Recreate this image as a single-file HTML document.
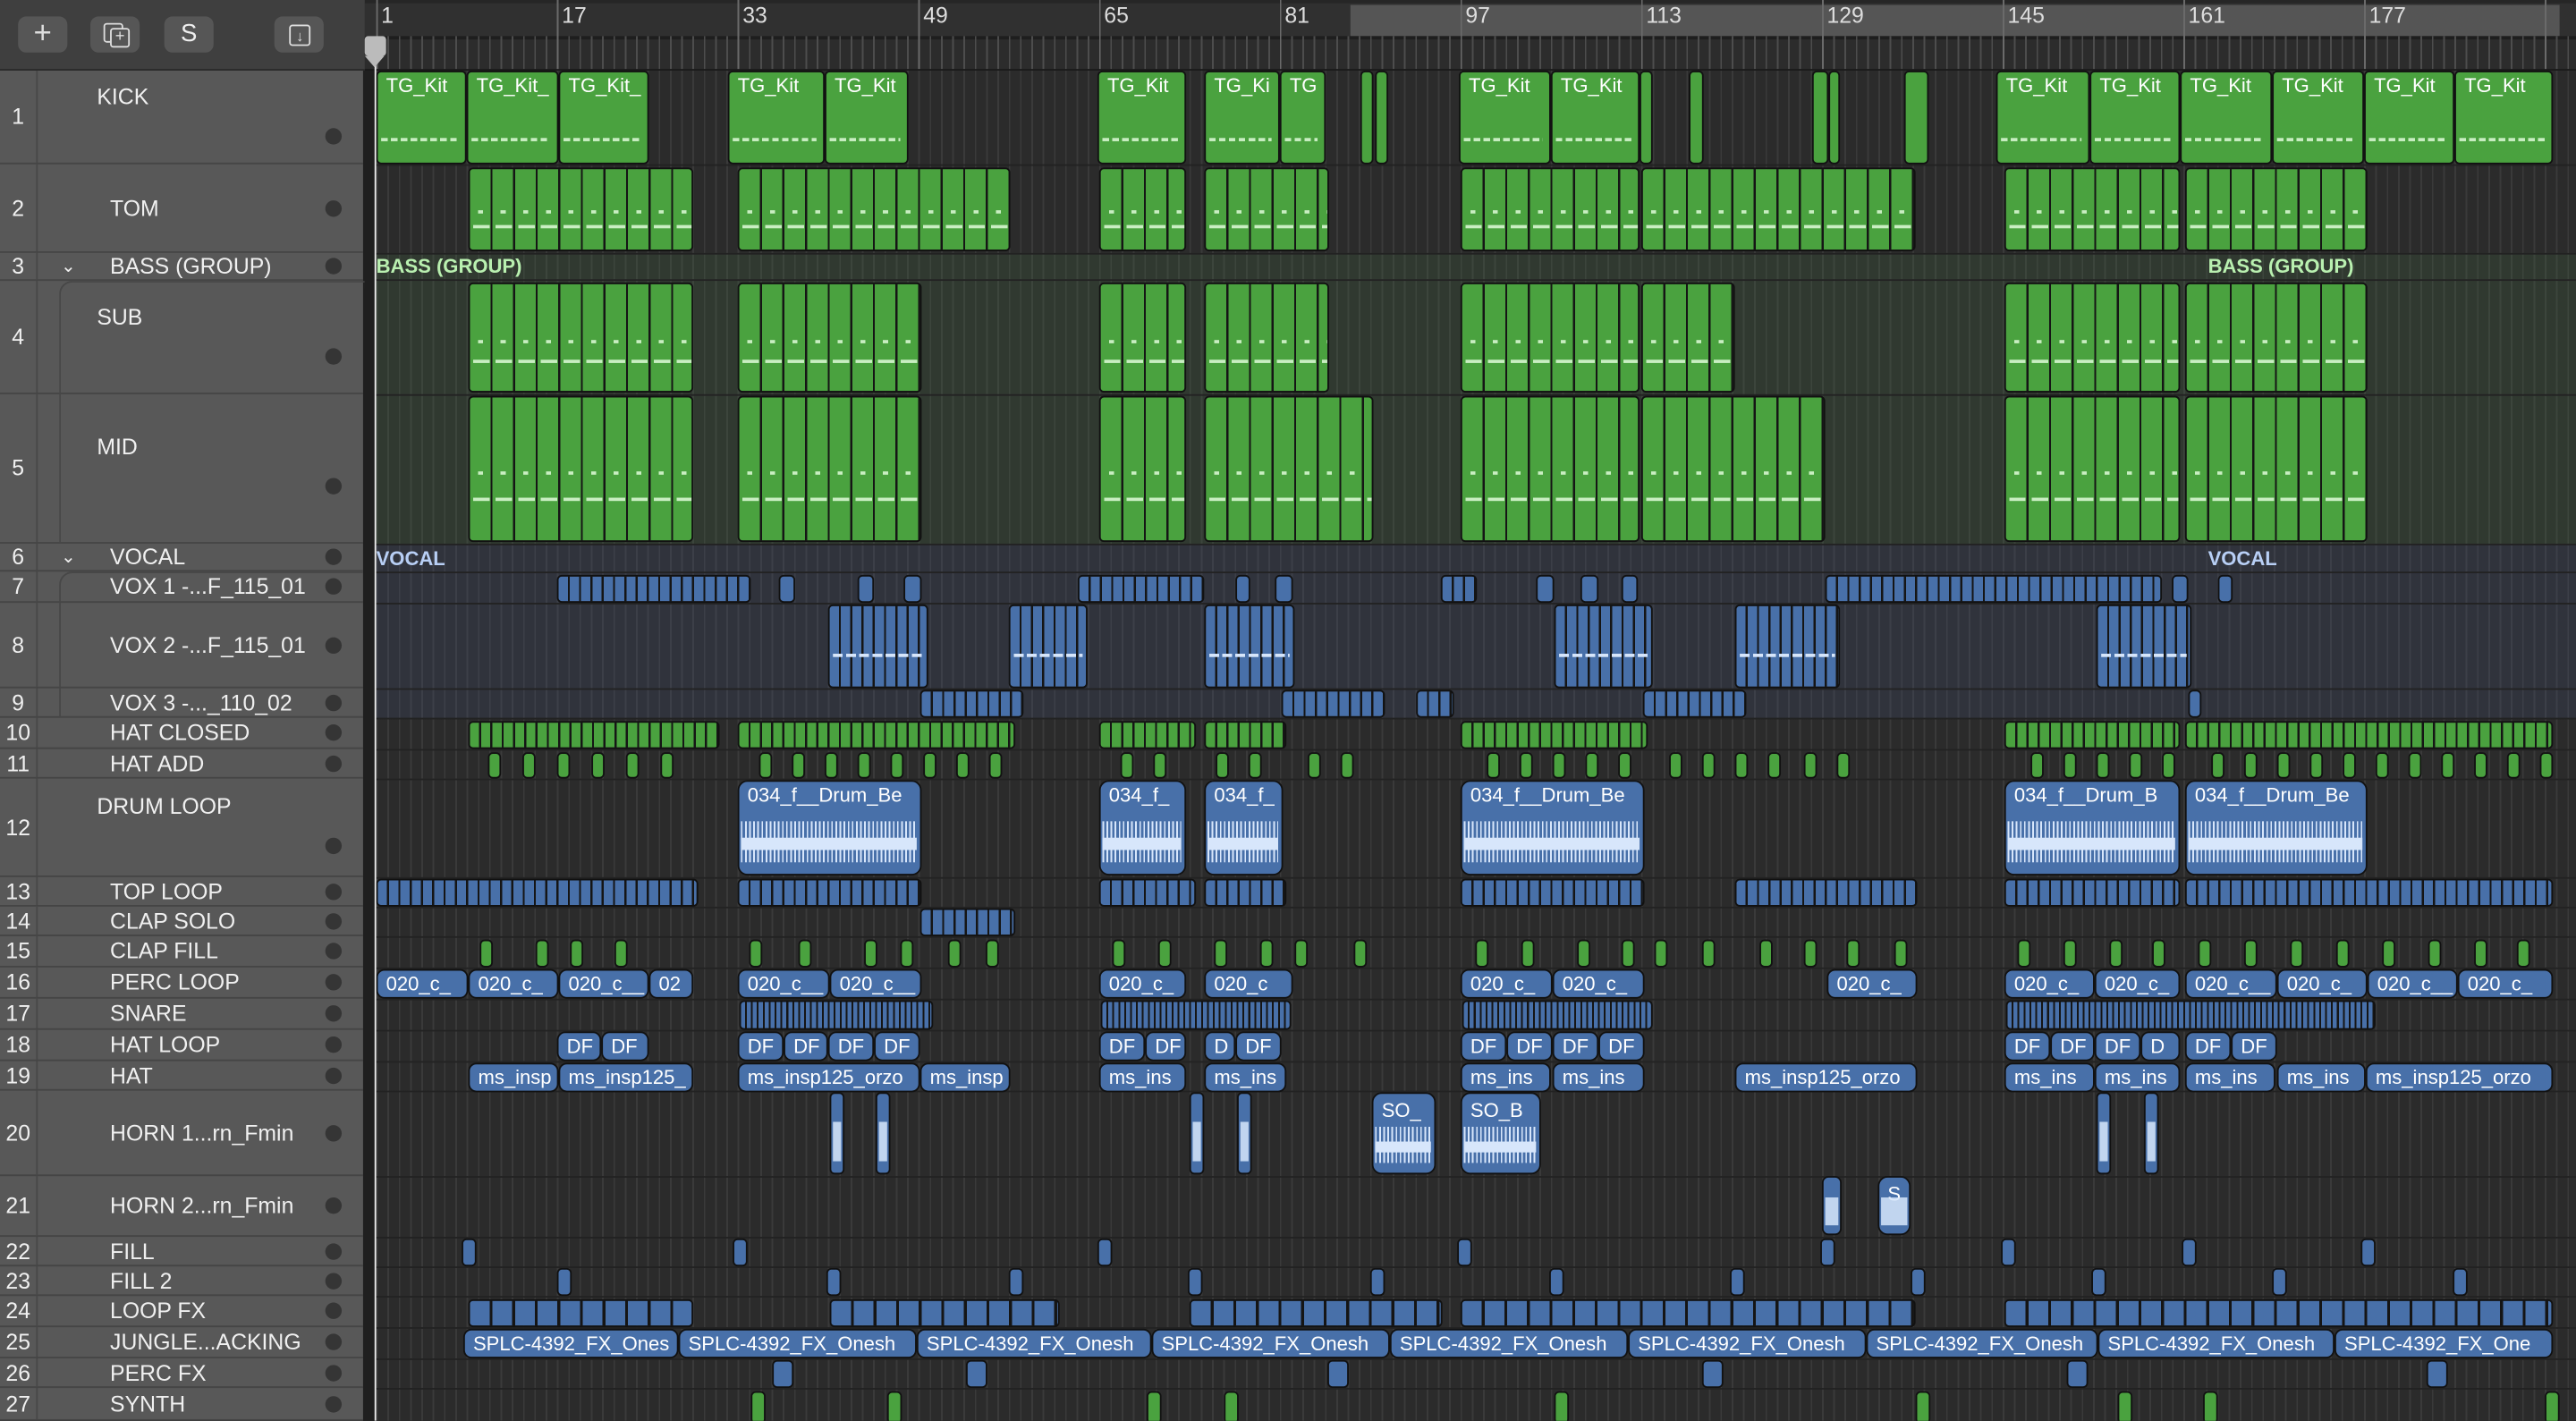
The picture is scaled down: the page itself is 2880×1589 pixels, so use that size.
<!DOCTYPE html>
<html><head><meta charset="utf-8">
<style>
html,body{margin:0;padding:0;background:#2a2a2a;overflow:hidden;width:2880px;height:1588px}
#p{position:absolute;left:0;top:0;width:1568px;height:865px;transform:scale(1.83673);transform-origin:0 0;font-family:"Liberation Sans",sans-serif;background:#2b2b2b;overflow:hidden}
.a{position:absolute}
.hd{position:absolute;left:0;width:221px;background:#585858;border-bottom:1px solid #454545;box-sizing:border-box;color:#f0f0f0;font-size:13.5px}
.hd .n{position:absolute;left:0;width:22px;text-align:center;top:50%;transform:translateY(-50%)}
.hd .t{position:absolute;left:67px;top:50%;transform:translateY(-50%);white-space:nowrap}
.hd .d{position:absolute;left:198px;top:50%;margin-top:-5px;width:10px;height:10px;border-radius:50%;background:#353535}
.hd .c{position:absolute;left:22px;top:0;bottom:0;border-left:1px solid #474747}
.row{position:absolute;left:0;width:1568px}
.r{position:absolute;top:0;bottom:0;box-sizing:border-box;border:1px solid #111;border-radius:3px;overflow:hidden;color:#fff;font-size:12px;line-height:14px;padding:1px 0 0 5px;white-space:nowrap}
.g{background:#4aa23f}
.b{background:#4870a9}
.gs{background:repeating-linear-gradient(90deg,#4aa23f 0 5.6px,#151515 5.6px 6.875px)}
.gs2{background:repeating-linear-gradient(90deg,#4aa23f 0 12.5px,#151515 12.5px 13.75px)}
.bs{background:repeating-linear-gradient(90deg,#4870a9 0 5.6px,#151515 5.6px 6.875px)}
.k::after{content:"";position:absolute;left:2px;right:4px;top:40px;height:2px;background:repeating-linear-gradient(90deg,#c9eec2 0 4px,transparent 4px 6px)}
.m::before{content:"";position:absolute;left:0;right:0;top:52%;height:2px;background:repeating-linear-gradient(90deg,transparent 0 5px,#c9eec2 5px 8px,transparent 8px 13.75px)}
.m::after{content:"";position:absolute;left:0;right:0;top:70%;height:2px;background:repeating-linear-gradient(90deg,transparent 0 2px,#c9eec2 2px 12px,transparent 12px 13.75px)}
.w::after{content:"";position:absolute;left:1px;right:2px;top:42%;bottom:12%;background:linear-gradient(#d7e6fb,#d7e6fb) 0 55%/100% 30% no-repeat,repeating-linear-gradient(90deg,#d7e6fb 0 1px,transparent 1px 2.5px)}
.vl::after{content:"";position:absolute;left:2px;right:2px;top:60%;height:2px;background:repeating-linear-gradient(90deg,#d7e6fb 0 6px,transparent 6px 8px)}
.ws::after{content:"";position:absolute;left:1px;right:1px;top:35%;bottom:15%;background:#d7e6fb;opacity:.85}
</style></head><body><div id="p">

<div class="a" style="left:229px;top:43px;width:1339px;height:822px;background:repeating-linear-gradient(90deg,#3a3a3a 0 1px,transparent 1px 6.875px)"></div>
<div class="a" style="left:222px;top:154px;width:1346px;height:177px;background:rgba(70,110,70,0.22)"></div>
<div class="a" style="left:222px;top:331px;width:1346px;height:106px;background:rgba(70,90,140,0.18)"></div>
<div class="a" style="left:222px;top:0;width:1346px;height:865px;background:linear-gradient(#222,#222) 0 100px/100% 1px no-repeat,linear-gradient(#222,#222) 0 154px/100% 1px no-repeat,linear-gradient(#222,#222) 0 170px/100% 1px no-repeat,linear-gradient(#222,#222) 0 240px/100% 1px no-repeat,linear-gradient(#222,#222) 0 331px/100% 1px no-repeat,linear-gradient(#222,#222) 0 348px/100% 1px no-repeat,linear-gradient(#222,#222) 0 367px/100% 1px no-repeat,linear-gradient(#222,#222) 0 419px/100% 1px no-repeat,linear-gradient(#222,#222) 0 437px/100% 1px no-repeat,linear-gradient(#222,#222) 0 456px/100% 1px no-repeat,linear-gradient(#222,#222) 0 474px/100% 1px no-repeat,linear-gradient(#222,#222) 0 534px/100% 1px no-repeat,linear-gradient(#222,#222) 0 552px/100% 1px no-repeat,linear-gradient(#222,#222) 0 570px/100% 1px no-repeat,linear-gradient(#222,#222) 0 589px/100% 1px no-repeat,linear-gradient(#222,#222) 0 608px/100% 1px no-repeat,linear-gradient(#222,#222) 0 627px/100% 1px no-repeat,linear-gradient(#222,#222) 0 646px/100% 1px no-repeat,linear-gradient(#222,#222) 0 664px/100% 1px no-repeat,linear-gradient(#222,#222) 0 716px/100% 1px no-repeat,linear-gradient(#222,#222) 0 753px/100% 1px no-repeat,linear-gradient(#222,#222) 0 771px/100% 1px no-repeat,linear-gradient(#222,#222) 0 789px/100% 1px no-repeat,linear-gradient(#222,#222) 0 808px/100% 1px no-repeat,linear-gradient(#222,#222) 0 827px/100% 1px no-repeat,linear-gradient(#222,#222) 0 845px/100% 1px no-repeat"></div>

<div class="a" style="left:222px;top:0;width:1346px;height:22px;background:#303030;border-top:2px solid #262626;box-sizing:border-box"></div>
<div class="a" style="left:822px;top:3px;width:736px;height:19px;background:#555"></div>
<div class="a" style="left:222px;top:22px;width:1346px;height:21px;background:#2c2c2c;border-top:2px solid #1e1e1e;box-sizing:border-box"></div>
<div class="a" style="left:229px;top:22px;width:1339px;height:21px;background:repeating-linear-gradient(90deg,#4d4d4d 0 1px,transparent 1px 6.875px)"></div>
<div class="a" style="left:229px;top:0;width:1339px;height:43px;background:repeating-linear-gradient(90deg,#6a6a6a 0 1px,transparent 1px 110px)"></div>
<div class="a" style="left:222px;top:42px;width:1346px;height:1px;background:#1a1a1a"></div>
<div class="a" style="top:2px;color:#ddd;font-size:13.5px;left:0;width:1568px;height:20px">
<span class="a" style="left:232px">1</span><span class="a" style="left:342px">17</span><span class="a" style="left:452px">33</span><span class="a" style="left:562px">49</span><span class="a" style="left:672px">65</span><span class="a" style="left:782px">81</span><span class="a" style="left:892px">97</span><span class="a" style="left:1002px">113</span><span class="a" style="left:1112px">129</span><span class="a" style="left:1222px">145</span><span class="a" style="left:1332px">161</span><span class="a" style="left:1442px">177</span></div>

<div class="a" style="left:0;top:0;width:222px;height:43px;background:#3f3f3f;border-bottom:1px solid #2a2a2a;box-sizing:border-box"></div>
<div class="a" style="left:11px;top:10px;width:30px;height:22px;background:#565656;border-radius:5px;color:#ddd;text-align:center;font-size:19px;line-height:21px">+</div>
<div class="a" style="left:55px;top:10px;width:30px;height:22px;background:#565656;border-radius:5px"><div class="a" style="left:8px;top:4px;width:10px;height:10px;border:1.5px solid #ddd;border-radius:2px"></div><div class="a" style="left:12px;top:7px;width:10px;height:10px;border:1.5px solid #ddd;border-radius:2px;background:#565656;color:#ddd;font-size:10px;line-height:10px;text-align:center">+</div></div>
<div class="a" style="left:100px;top:10px;width:30px;height:22px;background:#565656;border-radius:5px;color:#eee;text-align:center;font-size:15px;line-height:22px">S</div>
<div class="a" style="left:167px;top:10px;width:30px;height:22px;background:#565656;border-radius:5px"><div class="a" style="left:9px;top:5px;width:11px;height:11px;border:1.5px solid #ddd;border-radius:2px;color:#ddd;font-size:9px;line-height:13px;text-align:center">↓</div></div>
<div class="a" style="left:220px;top:43px;width:8px;height:822px;background:#1f1f1f"></div>

<div class="hd" style="top:43px;height:57px"><div class="c"></div><div class="n">1</div><div class="t" style="left:59px;top:16px">KICK</div><div class="d" style="top:40px"></div></div>
<div class="hd" style="top:100px;height:54px"><div class="c"></div><div class="n">2</div><div class="t">TOM</div><div class="d"></div></div>
<div class="hd" style="top:154px;height:17px"><div class="c"></div><div class="n">3</div><div class="t" style="left:37px;font-size:11px">⌄</div><div class="t">BASS (GROUP)</div><div class="d"></div></div>
<div class="hd" style="top:171px;height:69px"><div class="c"></div><div class="n">4</div><div class="t" style="left:59px;top:22px">SUB</div><div class="d" style="top:46px"></div></div>
<div class="hd" style="top:240px;height:91px"><div class="c"></div><div class="n">5</div><div class="t" style="left:59px;top:32px">MID</div><div class="d" style="top:56px"></div></div>
<div class="a" style="left:36px;top:171px;width:185px;height:160px;border-left:1px solid #474747;border-top:1px solid #474747;border-top-left-radius:8px"></div>
<div class="hd" style="top:331px;height:17px"><div class="c"></div><div class="n">6</div><div class="t" style="left:37px;font-size:11px">⌄</div><div class="t">VOCAL</div><div class="d"></div></div>
<div class="hd" style="top:348px;height:19px"><div class="c"></div><div class="n">7</div><div class="t">VOX 1 -...F_115_01</div><div class="d"></div></div>
<div class="hd" style="top:367px;height:52px"><div class="c"></div><div class="n">8</div><div class="t">VOX 2 -...F_115_01</div><div class="d"></div></div>
<div class="hd" style="top:419px;height:18px"><div class="c"></div><div class="n">9</div><div class="t">VOX 3 -..._110_02</div><div class="d"></div></div>
<div class="a" style="left:36px;top:348px;width:185px;height:89px;border-left:1px solid #474747;border-top:1px solid #474747;border-bottom:1px solid #474747;border-top-left-radius:8px;box-sizing:border-box"></div>
<div class="hd" style="top:437px;height:19px"><div class="c"></div><div class="n">10</div><div class="t">HAT CLOSED</div><div class="d"></div></div>
<div class="hd" style="top:456px;height:18px"><div class="c"></div><div class="n">11</div><div class="t">HAT ADD</div><div class="d"></div></div>
<div class="hd" style="top:474px;height:60px"><div class="c"></div><div class="n">12</div><div class="t" style="left:59px;top:17px">DRUM LOOP</div><div class="d" style="top:41px"></div></div>
<div class="hd" style="top:534px;height:18px"><div class="c"></div><div class="n">13</div><div class="t">TOP LOOP</div><div class="d"></div></div>
<div class="hd" style="top:552px;height:18px"><div class="c"></div><div class="n">14</div><div class="t">CLAP SOLO</div><div class="d"></div></div>
<div class="hd" style="top:570px;height:19px"><div class="c"></div><div class="n">15</div><div class="t">CLAP FILL</div><div class="d"></div></div>
<div class="hd" style="top:589px;height:19px"><div class="c"></div><div class="n">16</div><div class="t">PERC LOOP</div><div class="d"></div></div>
<div class="hd" style="top:608px;height:19px"><div class="c"></div><div class="n">17</div><div class="t">SNARE</div><div class="d"></div></div>
<div class="hd" style="top:627px;height:19px"><div class="c"></div><div class="n">18</div><div class="t">HAT LOOP</div><div class="d"></div></div>
<div class="hd" style="top:646px;height:18px"><div class="c"></div><div class="n">19</div><div class="t">HAT</div><div class="d"></div></div>
<div class="hd" style="top:664px;height:52px"><div class="c"></div><div class="n">20</div><div class="t">HORN 1...rn_Fmin</div><div class="d"></div></div>
<div class="hd" style="top:716px;height:37px"><div class="c"></div><div class="n">21</div><div class="t">HORN 2...rn_Fmin</div><div class="d"></div></div>
<div class="hd" style="top:753px;height:18px"><div class="c"></div><div class="n">22</div><div class="t">FILL</div><div class="d"></div></div>
<div class="hd" style="top:771px;height:18px"><div class="c"></div><div class="n">23</div><div class="t">FILL 2</div><div class="d"></div></div>
<div class="hd" style="top:789px;height:19px"><div class="c"></div><div class="n">24</div><div class="t">LOOP FX</div><div class="d"></div></div>
<div class="hd" style="top:808px;height:19px"><div class="c"></div><div class="n">25</div><div class="t">JUNGLE...ACKING</div><div class="d"></div></div>
<div class="hd" style="top:827px;height:18px"><div class="c"></div><div class="n">26</div><div class="t">PERC FX</div><div class="d"></div></div>
<div class="hd" style="top:845px;height:20px"><div class="c"></div><div class="n">27</div><div class="t">SYNTH</div><div class="d"></div></div>

<div class="a" style="left:229px;top:155px;color:#b9f0b0;font-size:12px;font-weight:bold">BASS (GROUP)</div>
<div class="a" style="left:1344px;top:155px;color:#b9f0b0;font-size:12px;font-weight:bold">BASS (GROUP)</div>
<div class="a" style="left:229px;top:333px;color:#b8cff5;font-size:12px;font-weight:bold">VOCAL</div>
<div class="a" style="left:1344px;top:333px;color:#b8cff5;font-size:12px;font-weight:bold">VOCAL</div>

<div class="row" style="top:43px;height:57px">
<div class="r g k" style="left:229px;width:55px">TG_Kit</div><div class="r g k" style="left:284px;width:56px">TG_Kit_</div><div class="r g k" style="left:340px;width:55px">TG_Kit_</div>
<div class="r g k" style="left:443px;width:59px">TG_Kit</div><div class="r g k" style="left:502px;width:51px">TG_Kit</div>
<div class="r g k" style="left:668px;width:54px">TG_Kit</div><div class="r g k" style="left:733px;width:46px">TG_Ki</div><div class="r g k" style="left:779px;width:28px">TG</div>
<div class="r g" style="left:828px;width:8px"></div><div class="r g" style="left:837px;width:8px"></div>
<div class="r g k" style="left:888px;width:56px">TG_Kit</div><div class="r g k" style="left:944px;width:54px">TG_Kit</div><div class="r g" style="left:998px;width:8px"></div>
<div class="r g" style="left:1028px;width:9px"></div><div class="r g" style="left:1103px;width:10px"></div><div class="r g" style="left:1113px;width:7px"></div><div class="r g" style="left:1159px;width:15px"></div>
<div class="r g k" style="left:1215px;width:57px">TG_Kit</div><div class="r g k" style="left:1272px;width:55px">TG_Kit</div><div class="r g k" style="left:1327px;width:56px">TG_Kit</div><div class="r g k" style="left:1383px;width:56px">TG_Kit</div><div class="r g k" style="left:1439px;width:55px">TG_Kit</div><div class="r g k" style="left:1494px;width:60px">TG_Kit</div>
</div>
<div class="row" style="top:102px;height:51px">
<div class="r gs2 m" style="left:285px;width:137px"></div><div class="r gs2 m" style="left:449px;width:166px"></div><div class="r gs2 m" style="left:669px;width:53px"></div><div class="r gs2 m" style="left:733px;width:76px"></div><div class="r gs2 m" style="left:889px;width:109px"></div><div class="r gs2 m" style="left:999px;width:167px"></div><div class="r gs2 m" style="left:1220px;width:107px"></div><div class="r gs2 m" style="left:1330px;width:111px"></div>
</div>
<div class="row" style="top:172px;height:67px">
<div class="r gs2 m" style="left:285px;width:137px"></div><div class="r gs2 m" style="left:449px;width:112px"></div><div class="r gs2 m" style="left:669px;width:53px"></div><div class="r gs2 m" style="left:733px;width:76px"></div><div class="r gs2 m" style="left:889px;width:109px"></div><div class="r gs2 m" style="left:999px;width:57px"></div><div class="r gs2 m" style="left:1220px;width:107px"></div><div class="r gs2 m" style="left:1330px;width:111px"></div>
</div>
<div class="row" style="top:241px;height:89px">
<div class="r gs2 m" style="left:285px;width:137px"></div><div class="r gs2 m" style="left:449px;width:112px"></div><div class="r gs2 m" style="left:669px;width:53px"></div><div class="r gs2 m" style="left:733px;width:103px"></div><div class="r gs2 m" style="left:889px;width:109px"></div><div class="r gs2 m" style="left:999px;width:112px"></div><div class="r gs2 m" style="left:1220px;width:107px"></div><div class="r gs2 m" style="left:1330px;width:111px"></div>
</div>
<div class="row" style="top:350px;height:17px">
<div class="r bs" style="left:339px;width:118px"></div><div class="r b" style="left:474px;width:10px"></div><div class="r b" style="left:522px;width:10px"></div><div class="r b" style="left:550px;width:11px"></div><div class="r bs" style="left:656px;width:77px"></div><div class="r b" style="left:752px;width:9px"></div><div class="r b" style="left:776px;width:11px"></div><div class="r bs" style="left:877px;width:22px"></div><div class="r b" style="left:935px;width:11px"></div><div class="r b" style="left:962px;width:11px"></div><div class="r b" style="left:987px;width:10px"></div><div class="r bs" style="left:1111px;width:205px"></div><div class="r b" style="left:1322px;width:10px"></div><div class="r b" style="left:1350px;width:9px"></div>
</div>
<div class="row" style="top:368px;height:51px">
<div class="r bs vl" style="left:504px;width:61px"></div><div class="r bs vl" style="left:614px;width:48px"></div><div class="r bs vl" style="left:733px;width:55px"></div><div class="r bs vl" style="left:946px;width:60px"></div><div class="r bs vl" style="left:1056px;width:64px"></div><div class="r bs vl" style="left:1276px;width:58px"></div>
</div>
<div class="row" style="top:420px;height:17px">
<div class="r bs" style="left:560px;width:63px"></div><div class="r bs" style="left:780px;width:63px"></div><div class="r bs" style="left:862px;width:23px"></div><div class="r bs" style="left:1000px;width:63px"></div><div class="r b" style="left:1332px;width:8px"></div>
</div>
<div class="row" style="top:439px;height:17px">
<div class="r gs" style="left:285px;width:153px"></div><div class="r gs" style="left:449px;width:169px"></div><div class="r gs" style="left:669px;width:59px"></div><div class="r gs" style="left:733px;width:50px"></div><div class="r gs" style="left:889px;width:114px"></div><div class="r gs" style="left:1220px;width:107px"></div><div class="r gs" style="left:1330px;width:224px"></div>
</div>
<div class="row" style="top:458px;height:16px">
<div class="r g" style="left:297px;width:8px"></div><div class="r g" style="left:318px;width:8px"></div><div class="r g" style="left:339px;width:8px"></div><div class="r g" style="left:360px;width:8px"></div><div class="r g" style="left:381px;width:8px"></div><div class="r g" style="left:402px;width:8px"></div><div class="r g" style="left:462px;width:8px"></div><div class="r g" style="left:482px;width:8px"></div><div class="r g" style="left:502px;width:8px"></div><div class="r g" style="left:522px;width:8px"></div><div class="r g" style="left:542px;width:8px"></div><div class="r g" style="left:562px;width:8px"></div><div class="r g" style="left:582px;width:8px"></div><div class="r g" style="left:602px;width:8px"></div><div class="r g" style="left:682px;width:8px"></div><div class="r g" style="left:702px;width:8px"></div><div class="r g" style="left:740px;width:8px"></div><div class="r g" style="left:760px;width:8px"></div><div class="r g" style="left:796px;width:8px"></div><div class="r g" style="left:816px;width:8px"></div><div class="r g" style="left:905px;width:8px"></div><div class="r g" style="left:925px;width:8px"></div><div class="r g" style="left:945px;width:8px"></div><div class="r g" style="left:965px;width:8px"></div><div class="r g" style="left:985px;width:8px"></div><div class="r g" style="left:1016px;width:8px"></div><div class="r g" style="left:1036px;width:8px"></div><div class="r g" style="left:1056px;width:8px"></div><div class="r g" style="left:1076px;width:8px"></div><div class="r g" style="left:1098px;width:8px"></div><div class="r g" style="left:1118px;width:8px"></div><div class="r g" style="left:1236px;width:8px"></div><div class="r g" style="left:1256px;width:8px"></div><div class="r g" style="left:1276px;width:8px"></div><div class="r g" style="left:1296px;width:8px"></div><div class="r g" style="left:1316px;width:8px"></div><div class="r g" style="left:1346px;width:8px"></div><div class="r g" style="left:1366px;width:8px"></div><div class="r g" style="left:1386px;width:8px"></div><div class="r g" style="left:1406px;width:8px"></div><div class="r g" style="left:1426px;width:8px"></div><div class="r g" style="left:1446px;width:8px"></div><div class="r g" style="left:1466px;width:8px"></div><div class="r g" style="left:1486px;width:8px"></div><div class="r g" style="left:1506px;width:8px"></div><div class="r g" style="left:1526px;width:8px"></div><div class="r g" style="left:1546px;width:8px"></div>
</div>
<div class="row" style="top:475px;height:58px">
<div class="r b w" style="left:449px;width:112px;border-radius:6px">034_f__Drum_Be</div><div class="r b w" style="left:669px;width:53px;border-radius:6px">034_f_</div><div class="r b w" style="left:733px;width:48px;border-radius:6px">034_f_</div><div class="r b w" style="left:889px;width:112px;border-radius:6px">034_f__Drum_Be</div><div class="r b w" style="left:1220px;width:107px;border-radius:6px">034_f__Drum_B</div><div class="r b w" style="left:1330px;width:111px;border-radius:6px">034_f__Drum_Be</div>
</div>
<div class="row" style="top:535px;height:17px">
<div class="r bs" style="left:229px;width:196px"></div><div class="r bs" style="left:449px;width:112px"></div><div class="r bs" style="left:669px;width:59px"></div><div class="r bs" style="left:733px;width:50px"></div><div class="r bs" style="left:889px;width:112px"></div><div class="r bs" style="left:1056px;width:111px"></div><div class="r bs" style="left:1220px;width:107px"></div><div class="r bs" style="left:1330px;width:224px"></div>
</div>
<div class="row" style="top:553px;height:17px"><div class="r bs" style="left:560px;width:58px"></div></div>
<div class="row" style="top:572px;height:17px">
<div class="r g" style="left:292px;width:8px"></div><div class="r g" style="left:326px;width:8px"></div><div class="r g" style="left:347px;width:8px"></div><div class="r g" style="left:374px;width:8px"></div><div class="r g" style="left:456px;width:8px"></div><div class="r g" style="left:486px;width:8px"></div><div class="r g" style="left:526px;width:8px"></div><div class="r g" style="left:548px;width:8px"></div><div class="r g" style="left:577px;width:8px"></div><div class="r g" style="left:600px;width:8px"></div><div class="r g" style="left:677px;width:8px"></div><div class="r g" style="left:705px;width:8px"></div><div class="r g" style="left:739px;width:8px"></div><div class="r g" style="left:767px;width:8px"></div><div class="r g" style="left:788px;width:8px"></div><div class="r g" style="left:824px;width:8px"></div><div class="r g" style="left:898px;width:8px"></div><div class="r g" style="left:926px;width:8px"></div><div class="r g" style="left:960px;width:8px"></div><div class="r g" style="left:987px;width:8px"></div><div class="r g" style="left:1007px;width:8px"></div><div class="r g" style="left:1036px;width:8px"></div><div class="r g" style="left:1071px;width:8px"></div><div class="r g" style="left:1098px;width:8px"></div><div class="r g" style="left:1124px;width:8px"></div><div class="r g" style="left:1153px;width:8px"></div><div class="r g" style="left:1228px;width:8px"></div><div class="r g" style="left:1256px;width:8px"></div><div class="r g" style="left:1284px;width:8px"></div><div class="r g" style="left:1310px;width:8px"></div><div class="r g" style="left:1338px;width:8px"></div><div class="r g" style="left:1366px;width:8px"></div><div class="r g" style="left:1394px;width:8px"></div><div class="r g" style="left:1422px;width:8px"></div><div class="r g" style="left:1450px;width:8px"></div><div class="r g" style="left:1478px;width:8px"></div><div class="r g" style="left:1506px;width:8px"></div><div class="r g" style="left:1532px;width:8px"></div>
</div>
<div class="row" style="top:590px;height:18px">
<div class="r b" style="left:229px;width:56px;border-radius:5px">020_c_</div><div class="r b" style="left:285px;width:55px;border-radius:5px">020_c_</div><div class="r b" style="left:340px;width:55px;border-radius:5px">020_c__</div><div class="r b" style="left:395px;width:27px;border-radius:5px">02</div><div class="r b" style="left:449px;width:56px;border-radius:5px">020_c__</div><div class="r b" style="left:505px;width:56px;border-radius:5px">020_c__</div><div class="r b" style="left:669px;width:53px;border-radius:5px">020_c_</div><div class="r b" style="left:733px;width:54px;border-radius:5px">020_c</div><div class="r b" style="left:889px;width:56px;border-radius:5px">020_c_</div><div class="r b" style="left:945px;width:56px;border-radius:5px">020_c_</div><div class="r b" style="left:1112px;width:55px;border-radius:5px">020_c_</div><div class="r b" style="left:1220px;width:55px;border-radius:5px">020_c_</div><div class="r b" style="left:1275px;width:52px;border-radius:5px">020_c_</div><div class="r b" style="left:1330px;width:56px;border-radius:5px">020_c__</div><div class="r b" style="left:1386px;width:55px;border-radius:5px">020_c_</div><div class="r b" style="left:1441px;width:55px;border-radius:5px">020_c__</div><div class="r b" style="left:1496px;width:58px;border-radius:5px">020_c_</div>
</div>
<div class="row" style="top:609px;height:18px">
<div class="r bs" style="left:450px;width:118px;background:repeating-linear-gradient(90deg,#4870a9 0 2.5px,#151515 2.5px 3.6px)"></div><div class="r bs" style="left:670px;width:116px;background:repeating-linear-gradient(90deg,#4870a9 0 2.5px,#151515 2.5px 3.6px)"></div><div class="r bs" style="left:890px;width:116px;background:repeating-linear-gradient(90deg,#4870a9 0 2.5px,#151515 2.5px 3.6px)"></div><div class="r bs" style="left:1221px;width:225px;background:repeating-linear-gradient(90deg,#4870a9 0 2.5px,#151515 2.5px 3.6px)"></div>
</div>
<div class="row" style="top:628px;height:18px">
<div class="r b" style="left:339px;width:27px;border-radius:5px">DF</div><div class="r b" style="left:366px;width:29px;border-radius:5px">DF</div><div class="r b" style="left:449px;width:28px;border-radius:5px">DF</div><div class="r b" style="left:477px;width:27px;border-radius:5px">DF</div><div class="r b" style="left:504px;width:28px;border-radius:5px">DF</div><div class="r b" style="left:532px;width:28px;border-radius:5px">DF</div><div class="r b" style="left:669px;width:28px;border-radius:5px">DF</div><div class="r b" style="left:697px;width:25px;border-radius:5px">DF</div><div class="r b" style="left:733px;width:19px;border-radius:5px">D</div><div class="r b" style="left:752px;width:28px;border-radius:5px">DF</div><div class="r b" style="left:889px;width:28px;border-radius:5px">DF</div><div class="r b" style="left:917px;width:28px;border-radius:5px">DF</div><div class="r b" style="left:945px;width:28px;border-radius:5px">DF</div><div class="r b" style="left:973px;width:28px;border-radius:5px">DF</div><div class="r b" style="left:1220px;width:28px;border-radius:5px">DF</div><div class="r b" style="left:1248px;width:27px;border-radius:5px">DF</div><div class="r b" style="left:1275px;width:28px;border-radius:5px">DF</div><div class="r b" style="left:1303px;width:24px;border-radius:5px">D</div><div class="r b" style="left:1330px;width:28px;border-radius:5px">DF</div><div class="r b" style="left:1358px;width:28px;border-radius:5px">DF</div>
</div>
<div class="row" style="top:647px;height:18px">
<div class="r b" style="left:285px;width:55px;border-radius:5px">ms_insp</div><div class="r b" style="left:340px;width:82px;border-radius:5px">ms_insp125_</div><div class="r b" style="left:449px;width:111px;border-radius:5px">ms_insp125_orzo</div><div class="r b" style="left:560px;width:55px;border-radius:5px">ms_insp</div><div class="r b" style="left:669px;width:53px;border-radius:5px">ms_ins</div><div class="r b" style="left:733px;width:50px;border-radius:5px">ms_ins</div><div class="r b" style="left:889px;width:55px;border-radius:5px">ms_ins</div><div class="r b" style="left:945px;width:56px;border-radius:5px">ms_ins</div><div class="r b" style="left:1056px;width:111px;border-radius:5px">ms_insp125_orzo</div><div class="r b" style="left:1220px;width:55px;border-radius:5px">ms_ins</div><div class="r b" style="left:1275px;width:52px;border-radius:5px">ms_ins</div><div class="r b" style="left:1330px;width:55px;border-radius:5px">ms_ins</div><div class="r b" style="left:1386px;width:54px;border-radius:5px">ms_ins</div><div class="r b" style="left:1440px;width:114px;border-radius:5px">ms_insp125_orzo</div>
</div>
<div class="row" style="top:665px;height:50px">
<div class="r b ws" style="left:505px;width:9px;padding:0"></div><div class="r b ws" style="left:533px;width:9px;padding:0"></div><div class="r b ws" style="left:724px;width:9px;padding:0"></div><div class="r b ws" style="left:753px;width:9px;padding:0"></div><div class="r b ws" style="left:1276px;width:9px;padding:0"></div><div class="r b ws" style="left:1305px;width:9px;padding:0"></div>
<div class="r b w" style="left:835px;width:39px;border-radius:6px;padding-top:3px">SO_</div><div class="r b w" style="left:889px;width:49px;border-radius:6px;padding-top:3px">SO_B</div>
</div>
<div class="row" style="top:716px;height:36px">
<div class="r b ws" style="left:1109px;width:12px;padding:0;border-radius:4px"></div><div class="r b ws" style="left:1143px;width:20px;border-radius:6px;padding:3px 0 0 5px">S</div>
</div>
<div class="row" style="top:754px;height:17px">
<div class="r b" style="left:281px;width:9px"></div><div class="r b" style="left:446px;width:9px"></div><div class="r b" style="left:668px;width:9px"></div><div class="r b" style="left:887px;width:9px"></div><div class="r b" style="left:1108px;width:9px"></div><div class="r b" style="left:1218px;width:9px"></div><div class="r b" style="left:1328px;width:9px"></div><div class="r b" style="left:1437px;width:9px"></div>
</div>
<div class="row" style="top:772px;height:17px">
<div class="r b" style="left:339px;width:9px"></div><div class="r b" style="left:503px;width:9px"></div><div class="r b" style="left:614px;width:9px"></div><div class="r b" style="left:723px;width:9px"></div><div class="r b" style="left:834px;width:9px"></div><div class="r b" style="left:943px;width:9px"></div><div class="r b" style="left:1053px;width:9px"></div><div class="r b" style="left:1163px;width:9px"></div><div class="r b" style="left:1273px;width:9px"></div><div class="r b" style="left:1383px;width:9px"></div><div class="r b" style="left:1493px;width:9px"></div>
</div>
<div class="row" style="top:791px;height:17px">
<div class="r bs" style="left:285px;width:137px;background:repeating-linear-gradient(90deg,#4870a9 0 12px,#151515 12px 13.75px)"></div><div class="r bs" style="left:505px;width:140px;background:repeating-linear-gradient(90deg,#4870a9 0 12px,#151515 12px 13.75px)"></div><div class="r bs" style="left:724px;width:154px;background:repeating-linear-gradient(90deg,#4870a9 0 12px,#151515 12px 13.75px)"></div><div class="r bs" style="left:889px;width:277px;background:repeating-linear-gradient(90deg,#4870a9 0 12px,#151515 12px 13.75px)"></div><div class="r bs" style="left:1220px;width:334px;background:repeating-linear-gradient(90deg,#4870a9 0 12px,#151515 12px 13.75px)"></div>
</div>
<div class="row" style="top:809px;height:18px">
<div class="r b" style="left:282px;width:131px;border-radius:5px">SPLC-4392_FX_Ones</div><div class="r b" style="left:413px;width:145px;border-radius:5px">SPLC-4392_FX_Onesh</div><div class="r b" style="left:558px;width:143px;border-radius:5px">SPLC-4392_FX_Onesh</div><div class="r b" style="left:701px;width:145px;border-radius:5px">SPLC-4392_FX_Onesh</div><div class="r b" style="left:846px;width:145px;border-radius:5px">SPLC-4392_FX_Onesh</div><div class="r b" style="left:991px;width:145px;border-radius:5px">SPLC-4392_FX_Onesh</div><div class="r b" style="left:1136px;width:141px;border-radius:5px">SPLC-4392_FX_Onesh</div><div class="r b" style="left:1277px;width:144px;border-radius:5px">SPLC-4392_FX_Onesh</div><div class="r b" style="left:1421px;width:133px;border-radius:5px">SPLC-4392_FX_One</div>
</div>
<div class="row" style="top:828px;height:17px">
<div class="r b" style="left:470px;width:13px"></div><div class="r b" style="left:588px;width:13px"></div><div class="r b" style="left:808px;width:13px"></div><div class="r b" style="left:1036px;width:13px"></div><div class="r b" style="left:1258px;width:13px"></div><div class="r b" style="left:1477px;width:13px"></div>
</div>
<div class="row" style="top:847px;height:20px">
<div class="r g" style="left:457px;width:9px"></div><div class="r g" style="left:540px;width:9px"></div><div class="r g" style="left:698px;width:9px"></div><div class="r g" style="left:745px;width:9px"></div><div class="r g" style="left:946px;width:9px"></div><div class="r g" style="left:1166px;width:9px"></div><div class="r g" style="left:1289px;width:9px"></div><div class="r g" style="left:1341px;width:9px"></div><div class="r g" style="left:1549px;width:9px"></div>
</div>

<div class="a" style="left:228px;top:24px;width:1px;height:841px;background:#eee"></div>
<div class="a" style="left:222px;top:22px;width:13px;height:12px;background:#bbb;border-radius:2px"></div>
<div class="a" style="left:222px;top:34px;width:0;height:0;border-left:6.5px solid transparent;border-right:6.5px solid transparent;border-top:7px solid #bbb"></div>
</div></body></html>
